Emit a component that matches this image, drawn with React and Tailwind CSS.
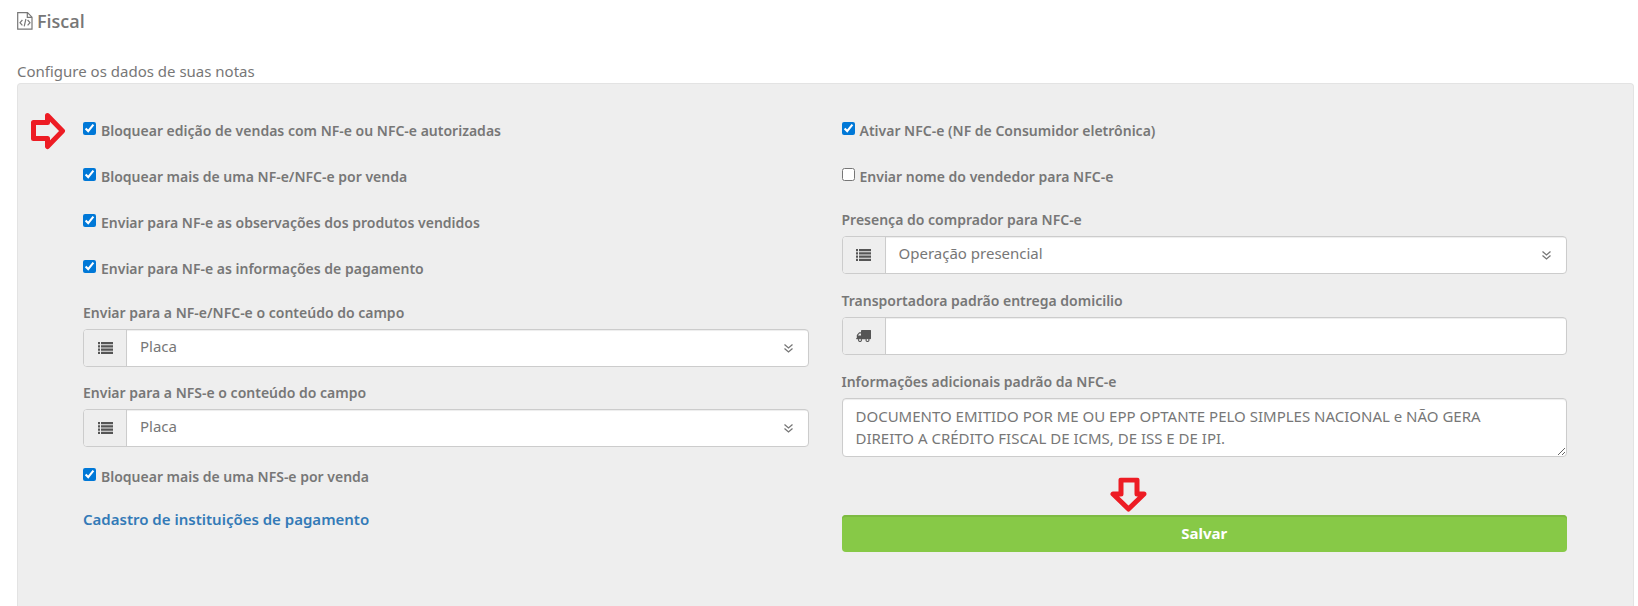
import React from "react";

const Arrow = ({ className }) => (
  <svg viewBox="0 0 35 38" className={className} fill="none" stroke="#ed1c24" strokeWidth="5" strokeLinejoin="round">
    <path d="M2.5 10.500h14v-7L31.500 19 16.500 34.500v-8h-14z" />
  </svg>
);

const FileIcon = () => (
  <svg width="16" height="18" viewBox="0 0 16 18" fill="none" stroke="#777" strokeWidth="1.2">
    <path d="M.7.700h9.800l4.500 4.500v12H.700zM10.300.800v4.600H15" />
    <path d="M5.400 8L3 10.700l2.400 2.700M10.600 8l2.400 2.700-2.400 2.700M8.900 7l-1.700 7.400" />
  </svg>
);

const ListIcon = () => (
  <svg width="15" height="12" viewBox="0 0 15 12" fill="#555">
    <path d="M0 0h2v2.200H0zM3 0h12v2.200H3zM0 3.200h2v2.300H0zM3 3.200h12v2.300H3zM0 6.500h2v2.300H0zM3 6.500h12v2.300H3zM0 9.800h2V12H0zM3 9.800h12V12H3z" />
  </svg>
);

const TruckIcon = () => (
  <svg width="15" height="12" viewBox="0 0 15 12">
    <path fill="#555" d="M6 0h8.500q.5 0 .5.500v8q0 .800-1 .800H.7Q0 9.300 0 8.500L.8 8V5L3.200 2.300H5V.500Q5 0 6 0z" />
    <path fill="#eee" d="M3.500 3.400H5v2.200H1.800z" />
    <g fill="#eee" stroke="#555" strokeWidth="1.100">
      <circle cx="4" cy="10" r="1.500" />
      <circle cx="11.500" cy="10" r="1.500" />
    </g>
  </svg>
);

const Check = ({ id, label, checked }) => (
  <div className="flex items-start gap-[5px]">
    <input id={id} type="checkbox" defaultChecked={checked} className="mt-px h-[13px] w-[13px] shrink-0 accent-[#0078d7]" />
    <label htmlFor={id} className="text-sm leading-5 font-semibold">{label}</label>
  </div>
);

const Field = ({ id, label, icon, children }) => (
  <div>
    <label htmlFor={id} className="mb-1.5 block text-sm leading-5 font-semibold">{label}</label>
    <div className="flex h-[38px] overflow-hidden rounded border border-[#ccc] bg-white">
      <span className="flex w-[43px] shrink-0 items-center justify-center border-r border-[#ccc] bg-[#eee]">{icon}</span>
      {children}
    </div>
  </div>
);

const Select = ({ id, label, value }) => (
  <Field id={id} label={label} icon={<ListIcon />}>
    <div className="relative flex-1">
      <select id={id} className="h-full w-full appearance-none px-[13px] pb-1 text-[15px] shadow-[inset_0_1px_1px_rgba(0,0,0,0.075)]">
        <option>{value}</option>
      </select>
      <svg className="pointer-events-none absolute top-3.5 right-[15px]" width="9" height="9" viewBox="0 0 9 9" fill="none" stroke="#777" strokeWidth="1.300">
        <path d="M.5.500l4 3.500 4-3.500M.5 4.500l4 3.500 4-3.500" />
      </svg>
    </div>
  </Field>
);

export default function App() {
  return (
    <div className="min-h-screen bg-white pr-1 pl-[17px] font-['Noto_Sans',sans-serif] text-[#777]">
      <h1 className="flex h-[42px] items-center gap-1 font-['Open_Sans',sans-serif] text-lg font-semibold">
        <FileIcon />
        Fiscal
      </h1>
      <p className="pt-[19px] pb-0.5 text-[15px] leading-5">Configure os dados de suas notas</p>
      <form className="relative grid min-h-[calc(100vh-83px)] grid-cols-2 gap-x-[33px] rounded-t border border-b-0 border-[#e3e3e3] bg-[#eee] pt-[37px] pr-[66px] pb-12 pl-[65px]">
        <Arrow className="absolute top-7 left-[13px] h-[38px] w-[35px]" />
        <div className="flex flex-col">
          <div className="mb-6 flex flex-col gap-[26px]">
            <Check id="edicao" label="Bloquear edição de vendas com NF-e ou NFC-e autorizadas" checked />
            <Check id="mais-nfe" label="Bloquear mais de uma NF-e/NFC-e por venda" checked />
            <Check id="observacoes" label="Enviar para NF-e as observações dos produtos vendidos" checked />
            <Check id="pagamento" label="Enviar para NF-e as informações de pagamento" checked />
          </div>
          <div className="mb-5 flex flex-col gap-4">
            <Select id="campo-nfe" label="Enviar para a NF-e/NFC-e o conteúdo do campo" value="Placa" />
            <Select id="campo-nfse" label="Enviar para a NFS-e o conteúdo do campo" value="Placa" />
          </div>
          <Check id="mais-nfse" label="Bloquear mais de uma NFS-e por venda" checked />
          <a href="#" className="mt-[22px] self-start text-[15px] leading-[21px] font-semibold text-[#337ab7]">
            Cadastro de instituições de pagamento
          </a>
        </div>
        <div className="flex flex-col">
          <div className="mb-[23px] flex flex-col gap-[26px]">
            <Check id="ativar" label="Ativar NFC-e (NF de Consumidor eletrônica)" checked />
            <Check id="vendedor" label="Enviar nome do vendedor para NFC-e" />
          </div>
          <div className="flex flex-col gap-[17px]">
            <Select id="presenca" label="Presença do comprador para NFC-e" value="Operação presencial" />
            <Field id="transportadora" label="Transportadora padrão entrega domicilio" icon={<TruckIcon />}>
              <input id="transportadora" type="text" className="flex-1 px-[13px] text-[15px] shadow-[inset_0_1px_1px_rgba(0,0,0,0.075)]" />
            </Field>
            <div>
              <label htmlFor="info" className="mb-1.5 block text-sm leading-5 font-semibold">Informações adicionais padrão da NFC-e</label>
              <textarea
                id="info"
                rows={2}
                className="block h-[59px] w-full resize rounded border border-[#ccc] bg-white py-1.5 pr-8 pl-[13px] text-[15px] leading-[22px] shadow-[inset_0_1px_1px_rgba(0,0,0,0.075)]"
                defaultValue="DOCUMENTO EMITIDO POR ME OU EPP OPTANTE PELO SIMPLES NACIONAL e NÃO GERA DIREITO A CRÉDITO FISCAL DE ICMS, DE ISS E DE IPI."
              />
            </div>
          </div>
          <div className="relative mt-[58px]">
            <Arrow className="absolute -top-[39px] left-[37.2%] h-[38px] w-[35px] rotate-90" />
            <button type="submit" className="h-[37px] w-full rounded bg-[#87c947] text-[15px] font-bold text-white shadow-[inset_0_2px_0_#7dba42]">
              Salvar
            </button>
          </div>
        </div>
      </form>
    </div>
  );
}
